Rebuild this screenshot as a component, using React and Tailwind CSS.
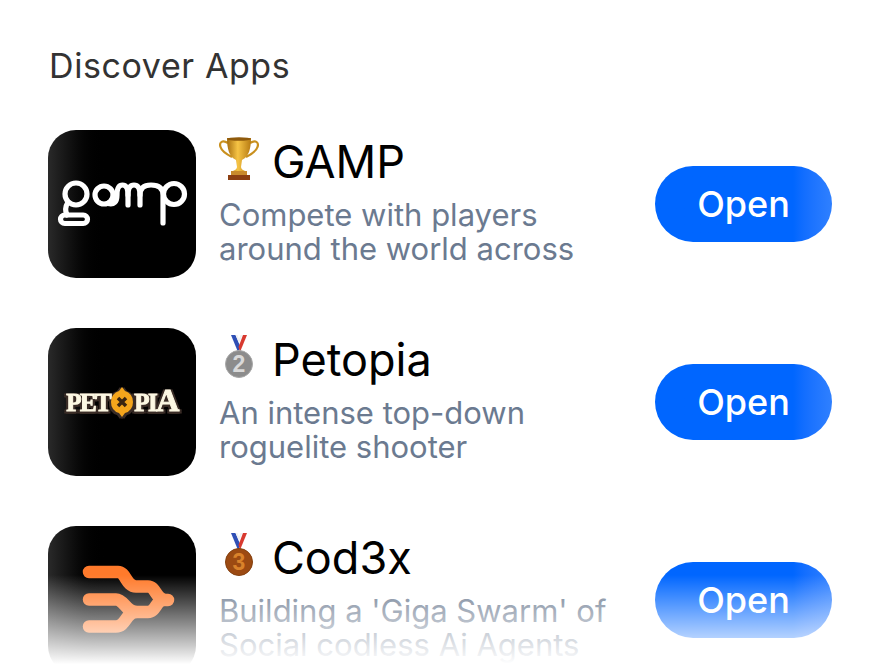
import { useId } from 'react';

function GampLogo() {
  return (
    <svg width="148" height="148" viewBox="0 0 148 148" fill="none" stroke="white" strokeWidth="5.2" strokeLinecap="round">
      <circle cx="28" cy="64" r="11" />
      <path d="M20 72 C17 77 17 81 19 85" />
      <rect x="12.500" y="85" width="27" height="8.500" rx="4.250" />
      <circle cx="56" cy="65" r="9" />
      <path d="M60 73.500 C66 75 69 72 69 65 C69 58 71 55 74.500 55 C78 55 80 58 80 65 V75" />
      <path d="M80 65 C80 58 82 55 86 55 C90 55 92 58 92 65 V75" />
      <path d="M92 65 C92 58 96 55 103 55 C111 55 115 58 115 65 V93" />
      <circle cx="126" cy="64" r="10.500" />
    </svg>
  );
}

function Cod3xLogo() {
  return (
    <svg width="148" height="148" viewBox="0 0 148 148" fill="none" stroke="#ff7a2b" strokeWidth="12.500" strokeLinecap="round">
      <path d="M41 46 H70 C78 46 78 60.500 88 60.500 H100 C108 60.500 108 74 118 74 H120" />
      <path d="M41 73.500 H68 C76 73.500 78 86 88 86" />
      <path d="M41 100.500 H68 C78 100.500 78 86 88 86 H100 C108 86 108 74 116 74" />
    </svg>
  );
}

function PetopiaLogo() {
  return (
    <div className="flex items-center font-['Liberation_Serif',serif] font-bold text-[25px] leading-none tracking-[-1.5px] text-[#fdf8e3] [-webkit-text-stroke:1px_#fdf8e3] [filter:drop-shadow(0_2px_0_#3a2c26)_drop-shadow(2px_0_0_#3a2c26)_drop-shadow(-2px_0_0_#3a2c26)]">
      <span>PET</span>
      <svg width="26" height="32" viewBox="0 0 24 32" className="mx-[-1px]">
        <path d="M12 1 L15 5 A11 11 0 0 1 23 16 A11 11 0 0 1 15 27 L12 31 L9 27 A11 11 0 0 1 1 16 A11 11 0 0 1 9 5 Z" fill="#f4a51c" />
        <path d="M8 12 L16 20 M16 12 L8 20" stroke="#3a2410" strokeWidth="3.500" />
      </svg>
      <span>PI</span>
      <span className="text-[32px] mt-[-5px]">A</span>
    </div>
  );
}

function Trophy() {
  const id = useId();
  return (
    <svg width="40" height="44" viewBox="0 0 40 44" fill="none">
      <defs>
        <linearGradient id={id} x1="0" x2="1" y1="0" y2="0">
          <stop offset="0" stopColor="#a86f10" />
          <stop offset="0.45" stopColor="#f6c445" />
          <stop offset="1" stopColor="#b67a12" />
        </linearGradient>
      </defs>
      <path d="M9 6 C3 2 0 6 1.500 10 C3 15 9 18 13 20" stroke="#c9901e" strokeWidth="2.200" />
      <path d="M31 6 C37 2 40 6 38.500 10 C37 15 31 18 27 20" stroke="#c9901e" strokeWidth="2.200" />
      <path d="M8 1 H32 C32 11 30 20 23 23 L22 30 C22 32 24 33 26 34 H14 C16 33 18 32 18 30 L17 23 C10 20 8 11 8 1 Z" fill={`url(#${id})`} />
      <ellipse cx="20" cy="2" rx="12" ry="1.800" fill="#8f5a0c" />
      <rect x="12" y="34" width="16" height="4" fill="#c98a2c" />
      <rect x="9" y="38" width="22" height="5" fill="#8c3f12" />
    </svg>
  );
}

function Medal({ digit, fill, light, dark }) {
  return (
    <svg width="30" height="46" viewBox="0 0 30 46" fill="none">
      <path d="M7 1 L14 18 L16.500 13 L11.500 1 Z" fill="#2f4fb5" />
      <path d="M11.500 1 L15 9 L18.500 1 H16.500 L15 5 L13.500 1 Z" fill="#f1f1f1" />
      <path d="M23 1 L16 18 L14.500 13 L19 1 Z" fill="#d8392f" />
      <circle cx="15" cy="30" r="13.500" fill={fill} stroke={dark} strokeWidth="1" />
      <text x="15" y="38" textAnchor="middle" fill={light} fontSize="23" fontWeight="700" fontFamily="Liberation Sans, sans-serif">{digit}</text>
    </svg>
  );
}

const apps = [
  {
    name: 'GAMP',
    line1: 'Compete with players',
    line2: 'around the world across',
    badge: <Trophy />,
    logo: <GampLogo />,
  },
  {
    name: 'Petopia',
    line1: 'An intense top-down',
    line2: 'roguelite shooter',
    badge: <Medal digit="2" fill="#8c8c8c" light="#d9d9d9" dark="#a8a8a8" />,
    logo: <PetopiaLogo />,
  },
  {
    name: 'Cod3x',
    line1: "Building a 'Giga Swarm' of",
    line2: 'Social codless Ai Agents',
    badge: <Medal digit="3" fill="#9c4a12" light="#d9822b" dark="#84400f" />,
    logo: <Cod3xLogo />,
  },
];

function AppRow({ app }) {
  return (
    <div className="flex items-center h-[148px] shrink-0">
      <div className="w-[148px] h-[148px] shrink-0 rounded-[28px] bg-gradient-to-r from-[#2a2a2a] via-black via-[40%] to-black flex items-center justify-center">
        {app.logo}
      </div>
      <div className="ml-[23px] flex flex-col self-start pt-[7px]">
        <div className="flex items-center h-[50px]">
          <div className="w-[40px] flex justify-center mt-[-6px]">{app.badge}</div>
          <span className="ml-[13px] text-[45px] leading-[50px] text-black">{app.name}</span>
        </div>
        <p className="mt-[11px] text-[31px] leading-[34px] text-[#6b7a90] whitespace-nowrap">{app.line1}</p>
        <p className="text-[31px] leading-[34px] text-[#6b7a90] whitespace-nowrap">{app.line2}</p>
      </div>
      <button className="ml-auto w-[177px] h-[76px] shrink-0 rounded-full bg-gradient-to-r from-[#0066ff] via-[#0066ff] via-[78%] to-[#2f80ff] text-white text-[36px] font-medium">
        Open
      </button>
    </div>
  );
}

export default function App() {
  return (
    <div className="relative h-screen overflow-hidden bg-white px-[48px] pt-[44px] font-['Inter',sans-serif]">
      <h2 className="text-[34px] leading-[44px] tracking-[0.6px] text-[#333] ml-[1px]">Discover Apps</h2>
      <div className="mt-[42px] flex flex-col gap-[50px]">
        {apps.map((app) => (
          <AppRow key={app.name} app={app} />
        ))}
      </div>
      <div className="absolute left-0 right-0 bottom-0 h-[97px] bg-gradient-to-b from-white/0 to-white to-[92%]" />
    </div>
  );
}
